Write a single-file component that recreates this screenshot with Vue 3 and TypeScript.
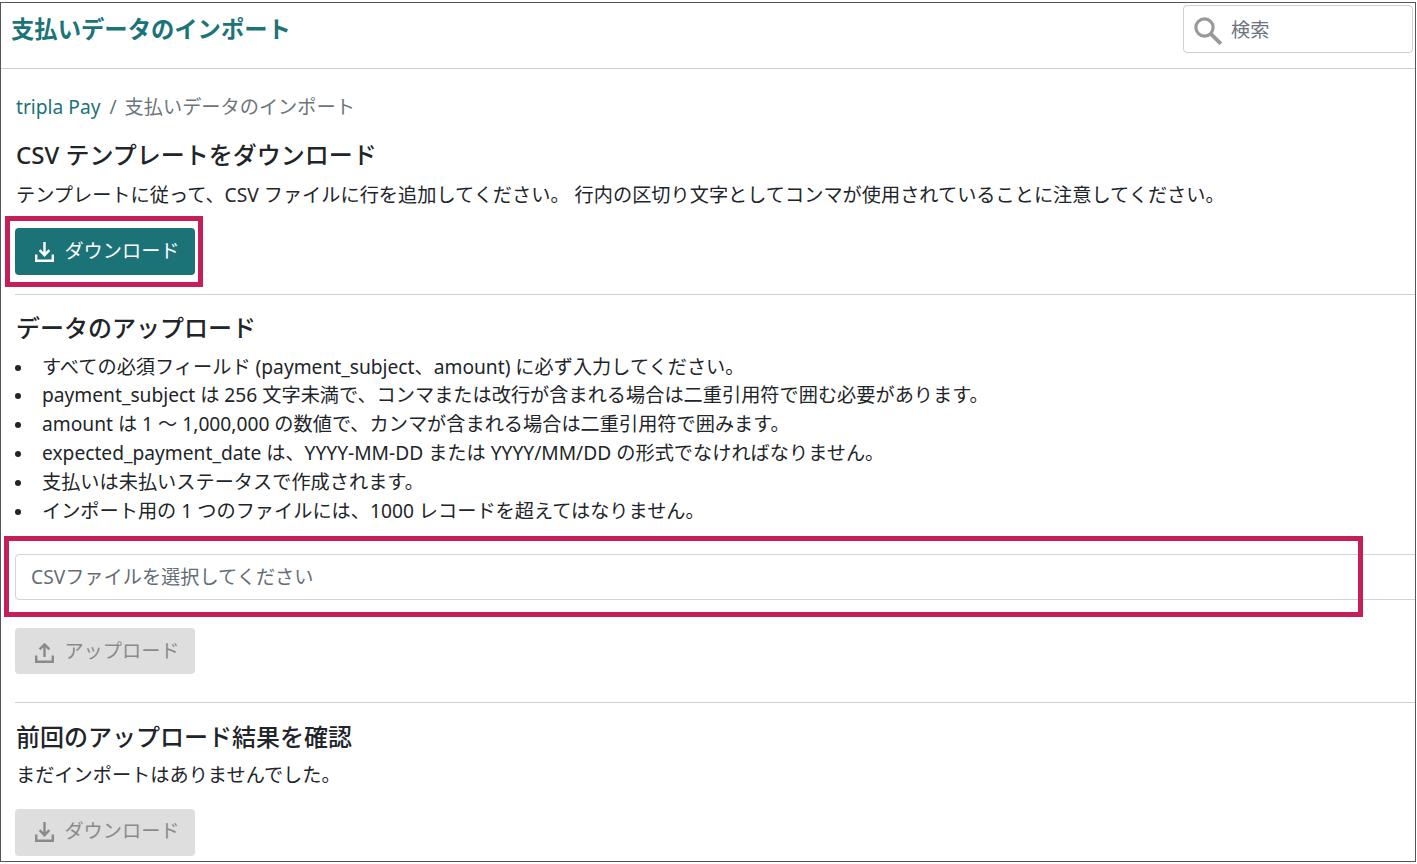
<script setup lang="ts">
const rules: string[] = [
  'すべての必須フィールド (payment_subject、amount) に必ず入力してください。',
  'payment_subject は 256 文字未満で、コンマまたは改行が含まれる場合は二重引用符で囲む必要があります。',
  'amount は 1 ～ 1,000,000 の数値で、カンマが含まれる場合は二重引用符で囲みます。',
  'expected_payment_date は、YYYY-MM-DD または YYYY/MM/DD の形式でなければなりません。',
  '支払いは未払いステータスで作成されます。',
  'インポート用の 1 つのファイルには、1000 レコードを超えてはなりません。',
]
</script>

<template>
  <div class="frame">
    <header class="topbar">
      <h1 class="title">支払いデータのインポート</h1>
      <div class="search">
        <svg class="search-icon" width="28" height="28" viewBox="0 0 28 28" fill="none" stroke="#999" stroke-width="3.2">
          <circle cx="10.5" cy="10.5" r="8.6" />
          <path d="M16.8 16.8 L26.8 26.8" stroke-width="3.8" />
        </svg>
        <span class="search-text">検索</span>
      </div>
    </header>

    <main class="content">
      <nav class="crumbs">
        <span class="crumb-link">tripla Pay</span>
        <span class="crumb-sep">/</span>
        <span class="crumb-current">支払いデータのインポート</span>
      </nav>

      <h2 class="heading first">CSV テンプレートをダウンロード</h2>
      <p class="text">テンプレートに従って、CSV ファイルに行を追加してください。 行内の区切り文字としてコンマが使用されていることに注意してください。</p>
      <button class="btn primary">
        <svg class="btn-icon" width="19" height="20" viewBox="0 0 19 20" fill="none" stroke="currentColor" stroke-width="2.4">
          <path d="M9.5 0 V13 M4.6 8.2 L9.5 13.2 L14.4 8.2" />
          <path d="M1.2 12.5 V18.8 H17.8 V12.5" />
        </svg>
        ダウンロード
      </button>

      <hr class="rule rule-a" />

      <h2 class="heading">データのアップロード</h2>
      <ul class="list">
        <li v-for="rule in rules" :key="rule" class="item">{{ rule }}</li>
      </ul>

      <div class="file">CSVファイルを選択してください</div>
      <button class="btn disabled upload">
        <svg class="btn-icon" width="19" height="20" viewBox="0 0 19 20" fill="none" stroke="currentColor" stroke-width="2.4">
          <path d="M9.5 14 V1.5 M4.6 6.3 L9.5 1.3 L14.4 6.3" />
          <path d="M1.2 12.5 V18.8 H17.8 V12.5" />
        </svg>
        アップロード
      </button>

      <hr class="rule rule-b" />

      <h2 class="heading last-heading">前回のアップロード結果を確認</h2>
      <p class="text last-text">まだインポートはありませんでした。</p>
      <button class="btn disabled last">
        <svg class="btn-icon" width="19" height="20" viewBox="0 0 19 20" fill="none" stroke="currentColor" stroke-width="2.4">
          <path d="M9.5 0 V13 M4.6 8.2 L9.5 13.2 L14.4 8.2" />
          <path d="M1.2 12.5 V18.8 H17.8 V12.5" />
        </svg>
        ダウンロード
      </button>
    </main>

    <div class="mark mark-a"></div>
    <div class="mark mark-b"></div>
  </div>
</template>

<style>
html, body { margin: 0; background: #fff; }
</style>

<style scoped>
.frame {
  position: relative;
  box-sizing: border-box;
  width: 1416px;
  height: 860px;
  margin-top: 2px;
  border: 1px solid #555;
  overflow: hidden;
  background: #fff;
  color: #212529;
  font-family: "Noto Sans", "Noto Sans CJK JP", sans-serif;
  font-size: 19.2px;
}
.topbar {
  box-sizing: border-box;
  height: 66px;
  border-bottom: 1px solid #cfcfcf;
  display: flex;
  justify-content: space-between;
  align-items: flex-start;
  padding: 2px 2px 0 10px;
}
.title {
  margin: 10px 0 0;
  font-size: 23.33px;
  line-height: 28px;
  font-weight: 700;
  color: #1a7478;
}
.search {
  box-sizing: border-box;
  width: 230px;
  height: 48px;
  border: 1px solid #d0d0d4;
  border-radius: 4px;
  display: flex;
  align-items: center;
  padding-left: 10px;
  gap: 9px;
}
.search-icon { flex: none; margin-top: 3px; }
.search-text { color: #6c757d; }
.content { padding: 24px 0 0 14px; }
.crumbs { display: flex; line-height: 28px; color: #6c757d; }
.crumb-link { color: #1a7478; padding-left: 1px; }
.crumb-sep { margin: 0 8px 0 9px; }
.heading {
  margin: 19px 0 0 1px;
  font-size: 24px;
  line-height: 28px;
  font-weight: 500;
  color: #212529;
}
.heading.first { margin-top: 20px; }
.heading.last-heading { margin-top: 20px; }
.text { margin: 12px 0 0 1px; line-height: 28px; }
.text.last-text { margin-top: 10px; }
.btn {
  box-sizing: border-box;
  display: flex;
  align-items: center;
  justify-content: center;
  gap: 10px;
  width: 180px;
  height: 47px;
  margin: 19px 0 0;
  padding: 0 0 4px 5px;
  border: 0;
  border-radius: 4px;
  font: inherit;
}
.btn-icon { flex: none; margin-top: 5px; }
.primary { background: #1b7377; color: #fff; }
.disabled { background: #dedede; color: #8a8a8a; }
.upload { margin-top: 28px; height: 46px; padding-bottom: 2px; }
.last { margin-top: 20px; padding-bottom: 6px; }
.rule { margin: 19px 0 0; border: 0; border-top: 1px solid #d2d2d2; height: 0; }
.rule-b { margin-top: 28px; }
.list {
  margin: 10.5px 0 0;
  padding: 0 0 0 27px;
  line-height: 28.9px;
  list-style: none;
}
.item { position: relative; }
.item::before {
  content: "";
  position: absolute;
  left: -27px;
  top: 12px;
  width: 6px;
  height: 6px;
  border-radius: 50%;
  background: #212529;
}
.file {
  box-sizing: border-box;
  width: 1500px;
  height: 46px;
  margin-top: 28.5px;
  padding-left: 15px;
  border: 1px solid #d2d2d8;
  border-radius: 4px;
  line-height: 44px;
  color: #636d75;
}
.mark {
  position: absolute;
  box-sizing: border-box;
  border: 5px solid #c41f5b;
  pointer-events: none;
}
.mark-a { left: 4px; top: 213px; width: 198px; height: 71px; }
.mark-b { left: 3px; top: 533px; width: 1359px; height: 81px; }
</style>
